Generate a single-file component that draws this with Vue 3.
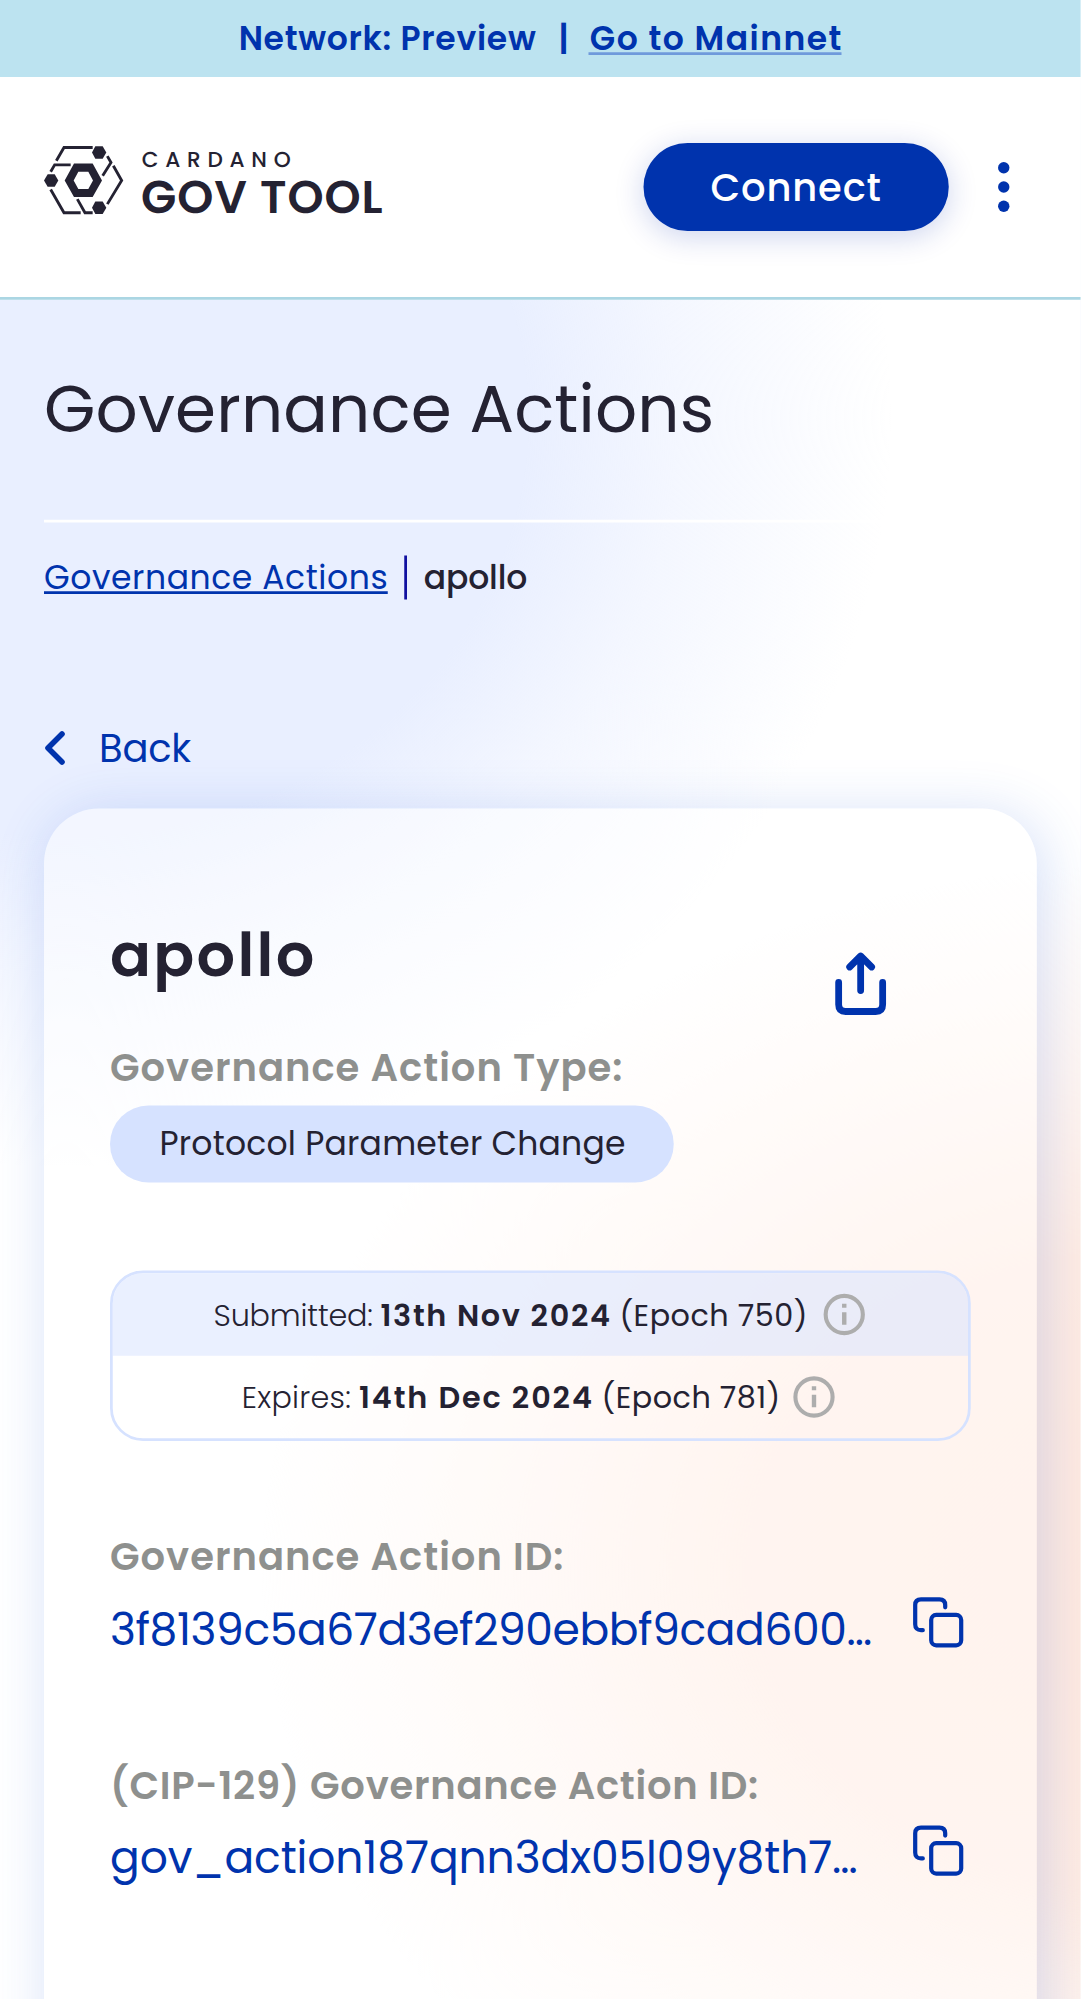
<script setup>
const dates = [
  { key: 'submitted', label: 'Submitted:', date: '13th Nov 2024', epoch: '(Epoch 750)' },
  { key: 'expires', label: 'Expires:', date: '14th Dec 2024', epoch: '(Epoch 781)' },
]
const ids = [
  { key: 'hash', label: 'Governance Action ID:', value: '3f8139c5a67d3ef290ebbf9cad600' },
  { key: 'cip', label: '(CIP-129) Governance Action ID:', value: 'gov_action187qnn3dx05l09y8th7' },
]
</script>

<template>
  <div class="viewport">
    <div class="page">
      <div class="banner">
        <span class="network">Network: Preview</span>
        <span class="bar">|</span>
        <a class="mainnet">Go to Mainnet</a>
      </div>

      <header class="header">
        <svg class="logo" viewBox="42 47 1018 206">
          <g fill="#242232">
            <path d="M186 67L196 48H218L229 67L218 86H196Z" />
            <path d="M42 151L53 132H74L85 151L74 170H53Z" />
            <path d="M186 233L196 214H218L229 233L218 252H196Z" />
            <path fill-rule="evenodd" d="M104 151L132 100H188L216 151L188 201H132ZM131 151L145 177H175L189 151L175 125H145Z" />
            <text class="cardano" x="335" y="111" textLength="447">CARDANO</text>
            <text class="govtool" x="333" y="250" textLength="725">GOV TOOL</text>
          </g>
          <g fill="none" stroke="#242232" stroke-width="8.5">
            <path d="M188 52H102L79 92" />
            <path d="M122 104H74L62 125" />
            <path d="M232 78L243 97L218 137" />
            <path d="M250 107L275 151L232 222" />
            <path d="M62 178L102 248H152" />
            <path d="M142 207L165 248H188" />
          </g>
        </svg>
        <button class="connect">Connect</button>
        <svg class="dots" viewBox="0.5 -1.5 13.75 52.25" fill="#0033ad">
          <circle cx="6" cy="6.7" r="5.7" />
          <circle cx="6" cy="26" r="5.7" />
          <circle cx="6" cy="45.3" r="5.7" />
        </svg>
      </header>

      <main class="main">
        <h1 class="title">Governance Actions</h1>
        <div class="rule"></div>
        <nav class="crumbs">
          <a class="crumb-link">Governance Actions</a>
          <span class="crumb-sep"></span>
          <span class="crumb-here">apollo</span>
        </nav>
        <a class="back">
          <svg class="chevron" viewBox="0 -1.25 22 38.5" fill="none" stroke="#0033ad" stroke-width="5.6" stroke-linecap="round" stroke-linejoin="round">
            <path d="M18 4L4 18L18 32" />
          </svg>
          <span>Back</span>
        </a>

        <section class="card">
          <div class="card-head">
            <h2 class="name">apollo</h2>
            <svg class="share" viewBox="-1.4 0 52.25 66" fill="none" stroke="#0033ad" stroke-width="6.8" stroke-linecap="round" stroke-linejoin="round">
              <path d="M26 39V5M15 15.5L26 4.5L37 15.5" />
              <path d="M4 31V53Q4 60 11 60H41Q48 60 48 53V31" />
            </svg>
          </div>
          <div class="label">Governance Action Type:</div>
          <div class="chip">Protocol Parameter Change</div>

          <div class="dates">
            <div v-for="d in dates" :key="d.key" class="date-row" :class="d.key">
              <span class="date-label">{{ d.label }}</span>
              <span class="date-value">{{ d.date }}</span>
              <span class="date-epoch">{{ d.epoch }}</span>
              <svg class="info" viewBox="-22 -22 44 44">
                <circle r="18.6" fill="none" stroke="#adadad" stroke-width="4.1" />
                <path d="M-2.2 -10.7h4.4v4h-4.4zM-2.2 -2.3h4.4v12.6h-4.4z" fill="#adadad" />
              </svg>
            </div>
          </div>

          <div v-for="item in ids" :key="item.key" class="id-block" :class="item.key">
            <div class="label">{{ item.label }}</div>
            <div class="id-row">
              <span class="id-value">{{ item.value }}…</span>
              <svg class="copy" viewBox="0 1 52.25 52.25" fill="none" stroke="#0033ad" stroke-width="4.2" stroke-linecap="round">
                <rect x="18.2" y="18.2" width="30" height="30.4" rx="5" />
                <path d="M9.8 33.4H8Q2.2 33.4 2.2 27.4V8.2Q2.2 2.6 8 2.6H26.5Q32.2 2.6 32.2 8.2V10.6" />
              </svg>
            </div>
          </div>
        </section>
      </main>
    </div>
  </div>
</template>

<style>
body { margin: 0; }
</style>

<style scoped>
.viewport { width: 1081px; height: 1999px; overflow: hidden; }
.page {
  width: 393.25px;
  height: 727px;
  overflow: hidden;
  transform: scale(2.75);
  transform-origin: 0 0;
  font-family: Poppins, Inter, sans-serif;
  color: #242232;
  white-space: nowrap;
  background:
    radial-gradient(ellipse 300px 272px at 24px 152px, #e9efff 0%, #e9efff 56%, rgba(240, 244, 255, 0.75) 74%, rgba(255, 255, 255, 0) 100%),
    radial-gradient(ellipse 325px 258px at 420px 572px, #ffe9df 0%, #ffece3 45%, rgba(255, 242, 236, 0.7) 72%, rgba(255, 255, 255, 0) 100%),
    #fff;
}
svg { flex: none; overflow: visible; }
.banner {
  height: 28px;
  display: flex;
  justify-content: center;
  background: #bce3f0;
  color: #0033ad;
  font-size: 12px;
  font-weight: 600;
  line-height: 28px;
}
.network { letter-spacing: 0.26px; }
.bar { margin: 0 7.7px 0 8px; }
.mainnet { height: 19px; border-bottom: 1px solid #6f9adb; letter-spacing: 0.53px; }
.header {
  height: 80px;
  padding: 0 16px;
  display: flex;
  align-items: flex-start;
  background: #fff;
  border-bottom: 1px solid #abd6e3;
}
.logo { width: 123.4px; height: 25px; margin-top: 25px; text-rendering: geometricPrecision; }
.cardano { font-size: 65px; font-weight: 500; }
.govtool { font-size: 138px; font-weight: 600; }
.connect {
  width: 111px;
  height: 32px;
  margin: 24px 18px 0 auto;
  padding: 0;
  border: 0;
  border-radius: 16px;
  background: #0033ad;
  color: #fff;
  font: inherit;
  font-size: 14px;
  font-weight: 500;
  letter-spacing: 0.3px;
  box-shadow: 0 2px 11px rgba(0, 40, 170, 0.2);
}
.dots { width: 5px; height: 19px; margin: 30px 9.25px 0 0; }
.main { padding: 22px 16px 0; }
.title { margin: 0; font-size: 24px; font-weight: 400; line-height: 36px; letter-spacing: 0.055px; }
.rule { height: 1px; margin-top: 22px; background: #fff; }
.crumbs { height: 16px; margin-top: 12px; display: flex; line-height: 16px; font-size: 12px; }
.crumb-link { height: 13px; border-bottom: 1px solid #0033ad; color: #0033ad; letter-spacing: 0.21px; }
.crumb-sep { width: 1px; height: 16px; margin: 0 5.8px 0 6.1px; background: #1010a0; }
.crumb-here { font-weight: 500; letter-spacing: -0.05px; }
.back {
  margin-top: 44px;
  height: 20px;
  display: flex;
  align-items: center;
  gap: 12px;
  color: #0033ad;
  font-size: 14px;
  line-height: 20px;
  letter-spacing: -0.08px;
}
.chevron { width: 8px; height: 14px; }
.card {
  height: 470px;
  margin-top: 12px;
  padding: 37px 24px 0;
  border-radius: 20px;
  background: rgba(255, 255, 255, 0.45);
  box-shadow: 2px 2px 20px rgba(47, 98, 220, 0.2);
}
.card-head { height: 33px; display: flex; justify-content: space-between; }
.name { margin: 0; font-size: 22px; font-weight: 600; line-height: 33px; letter-spacing: 0.83px; }
.share { width: 19px; height: 24px; margin: 15px 31.25px 0 0; }
.label { color: #8e908e; font-size: 14px; font-weight: 600; line-height: 20px; letter-spacing: 0.36px; }
.card-head + .label { margin-top: 14px; }
.cip .label { letter-spacing: 0.265px; }
.chip {
  width: max-content;
  height: 28px;
  margin-top: 4px;
  padding: 0 17px 0 18px;
  border-radius: 14px;
  background: #d6e2ff;
  font-size: 12px;
  line-height: 28px;
  letter-spacing: 0.08px;
}
.dates {
  height: 62px;
  margin-top: 32px;
  box-sizing: border-box;
  border: 1px solid #d6e2ff;
  border-radius: 12px;
  overflow: hidden;
  font-size: 11px;
}
.date-row { height: 30px; display: flex; align-items: center; justify-content: center; line-height: 30px; }
.submitted { padding-right: 0.8px; background: rgba(214, 226, 255, 0.52); }
.expires { padding-right: 1.4px; }
.date-label { font-weight: 300; letter-spacing: -0.07px; margin-right: 2.8px; }
.date-value { font-weight: 600; letter-spacing: 0.62px; margin-right: 2.8px; }
.date-epoch { letter-spacing: 0.18px; }
.expires .date-label { letter-spacing: 0.1px; }
.expires .date-value { letter-spacing: 0.7px; }
.info { width: 16px; height: 16px; margin-left: 5px; }
.expires .info { margin-left: 4px; }
.id-block { height: 51px; margin-top: 32px; }
.id-row {
  margin-top: 5px;
  display: flex;
  justify-content: space-between;
  color: #0033ad;
  font-size: 16px;
  line-height: 24px;
}
.id-value { letter-spacing: -0.15px; }
.cip .id-value { letter-spacing: -0.04px; }
.copy { width: 19px; height: 19px; margin-right: 2.25px; }
</style>
